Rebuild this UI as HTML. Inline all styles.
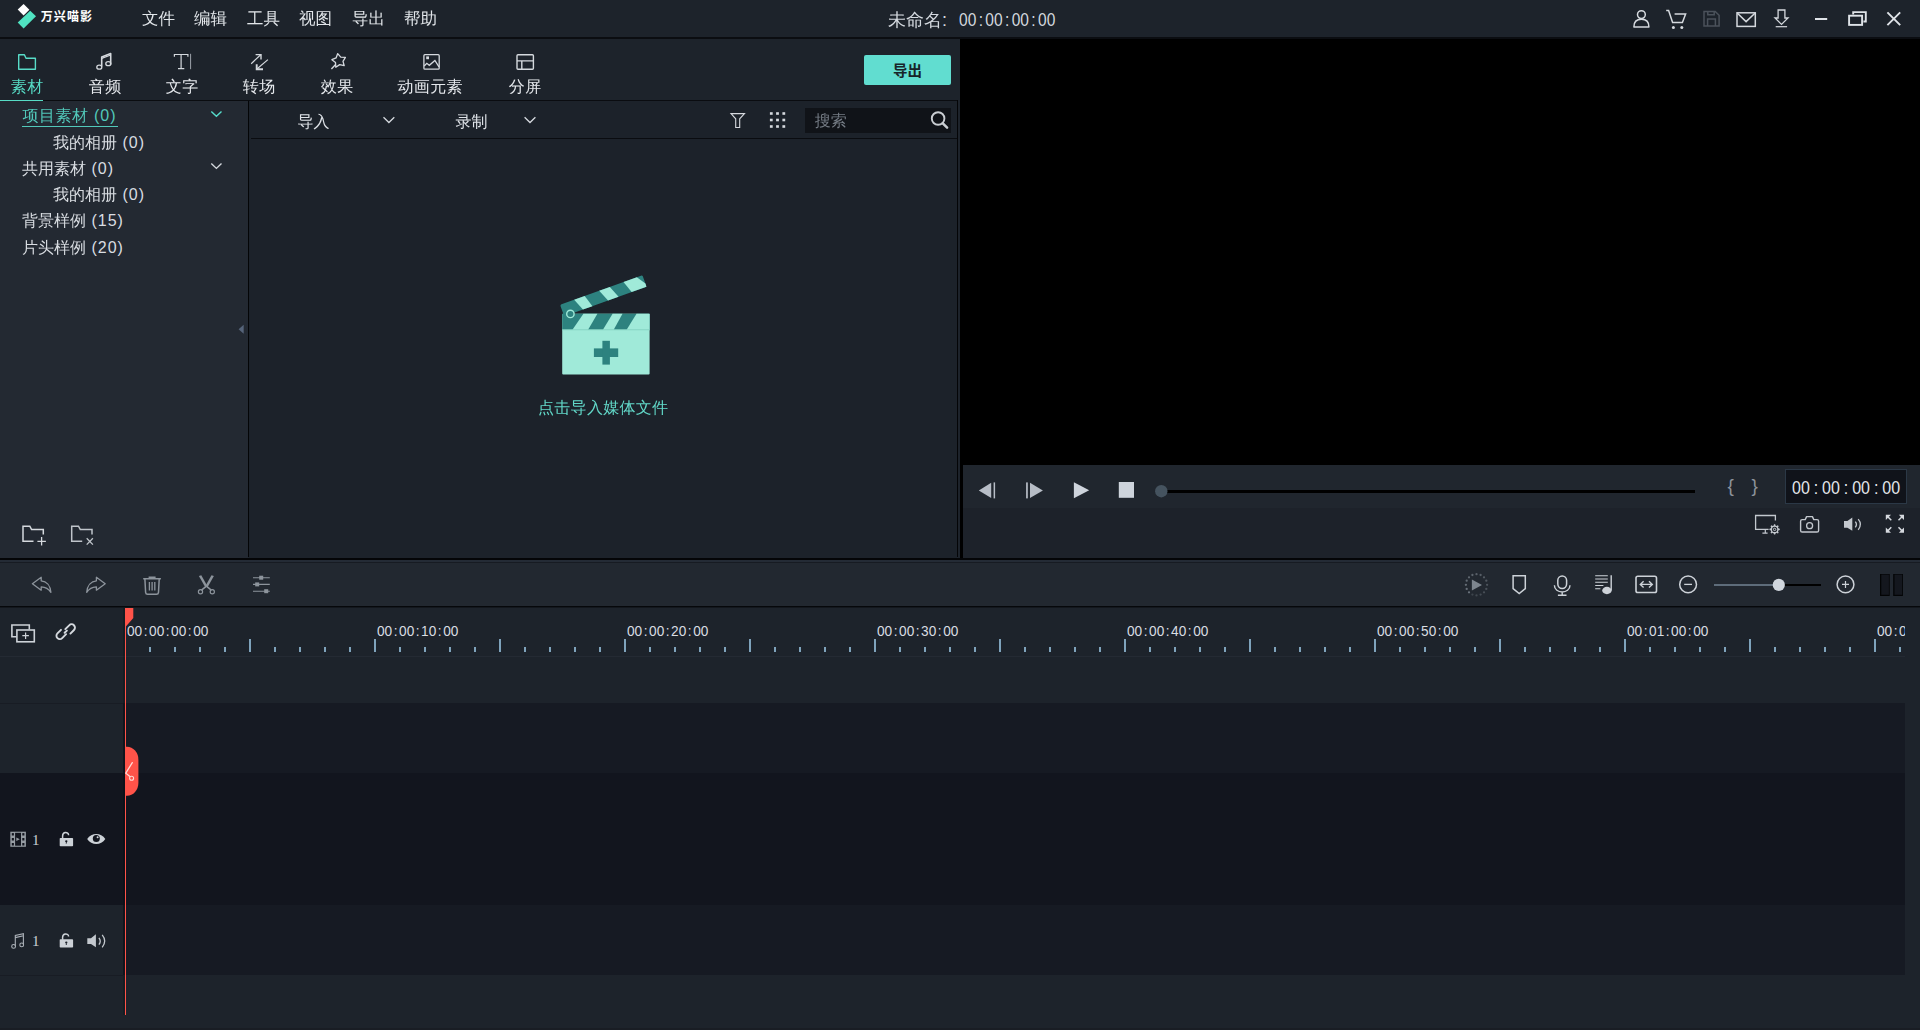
<!DOCTYPE html>
<html lang="zh-CN">
<head>
<meta charset="utf-8">
<title>万兴喵影</title>
<style>
*{box-sizing:border-box;margin:0;padding:0}
html,body{width:1920px;height:1030px;overflow:hidden;background:#1d232b}
body{position:relative;font-family:"Liberation Sans","WenQuanYi Zen Hei",sans-serif;font-size:16px;color:#d9dde2;-webkit-font-smoothing:antialiased}
.abs{position:absolute}
svg{position:absolute;overflow:visible}
.t{position:absolute;white-space:nowrap;line-height:20px}
.num{font-family:"Liberation Sans","WenQuanYi Zen Hei",sans-serif}
.sx{display:inline-block;transform-origin:0 50%;white-space:nowrap}
.sx i{font-style:normal}
.pn{letter-spacing:1px;margin-left:0}

/* ---------- title bar ---------- */
#titlebar{left:0;top:0;width:1920px;height:37px;background:#1d232b}
#titleline{left:0;top:37px;width:1920px;height:2px;background:#0b0d11}
.menu{top:7.8px;font-size:16.5px;color:#e2e6ea}
#brand{left:40.7px;top:8px;font-size:12px;letter-spacing:1.1px;font-weight:700;font-family:"Liberation Sans","Noto Sans CJK SC",sans-serif;color:#fff;line-height:18px}
#title{left:888px;top:9.5px;font-size:18px;color:#d4d9df}
#title2{left:958.6px;top:10px;font-size:17.5px;color:#d4d9df}
#title2 i{padding:0 2.7px}

/* ---------- tabs ---------- */
#tabbar{left:0;top:39px;width:960px;height:61px;background:#1d232b}
.tab{top:77px;font-size:16px;color:#e6e9ed;text-align:center;width:80px;line-height:20px;letter-spacing:.35px;text-indent:.35px}
.tab.on{color:#57dcc6}
#tabul{left:0;top:99.6px;width:43px;height:1.4px;background:#57dcc6}
#tabline{left:0;top:100px;width:958px;height:1px;background:#0a0c10}
#export{left:864px;top:55px;width:87px;height:30px;border-radius:2px;background:#61ddd0;color:#172428;font-size:14.5px;font-weight:700;font-family:"Liberation Sans","Noto Sans CJK SC",sans-serif;text-align:center;line-height:32px}

/* ---------- left tree ---------- */
#tree{left:0;top:101px;width:248px;height:457px;background:#232932}
#treeline{left:248px;top:101px;width:1px;height:456px;background:#040507}
.tr{font-size:16px;color:#eaedf0;letter-spacing:.5px}
.tr.on{color:#52c8ba}

/* ---------- media ---------- */
#media{left:249px;top:101px;width:708px;height:457px;background:#1c222a}
#medialine{left:251px;top:138px;width:706px;height:1px;background:#0a0c10}
#mediar{left:957px;top:100px;width:1px;height:457px;background:#040507}
#search{left:805px;top:108px;width:146px;height:24.5px;background:#101318}
#hint{left:538px;top:397.7px;font-size:16px;color:#62d9c9;letter-spacing:.3px}

/* ---------- preview ---------- */
#pv{left:960px;top:39px;width:960px;height:519px;background:#000}
#pvc{left:963px;top:465px;width:957px;height:93px;background:#1d222a}
#pvc1{left:963px;top:465px;width:957px;height:43px;background:#20262e}
#tcbox{left:1785px;top:469px;width:122px;height:35px;background:#10131a;border:1px solid #2b3846}
#tc{left:1791.7px;top:478px;font-size:18px;color:#e3e6ea}
#tc i{padding:0 4.4px}

/* ---------- separator & timeline toolbar ---------- */
#sep{left:0;top:558px;width:1920px;height:2px;background:#040507}
#tltb{left:0;top:560px;width:1920px;height:46px;background:#222830}
#tltbdk{left:0;top:562px;width:1920px;height:1px;background:#171b22}
#tltbhl{left:0;top:560px;width:1920px;height:2px;background:#242b35}
#tlline{left:0;top:606px;width:1920px;height:2px;background:linear-gradient(#06080b 0,#06080b 50%,#13171d 50%,#13171d 100%)}

/* ---------- timeline ---------- */
#ruler{left:0;top:608px;width:1920px;height:49px;background:#1d232b}
#rulerline{left:0;top:656px;width:1905px;height:1px;background:#242a33}
#ticks-s{left:149px;top:647px;width:1756px;height:5px;background:repeating-linear-gradient(90deg,#7fa3bc 0,#7fa3bc 2px,transparent 2px,transparent 25px)}
#ticks-l{left:249px;top:639px;width:1656px;height:13px;background:repeating-linear-gradient(90deg,#7fa3bc 0,#7fa3bc 2px,transparent 2px,transparent 125px)}
.rl{top:621px;font-size:14.5px;color:#d9dde2;line-height:20px}
.rl i{padding:0 1.65px}
#rowB{left:123px;top:703px;width:1782px;height:70px;background:#161a23}
#rowC{left:0;top:773px;width:1905px;height:132px;background:#12151e}
#rowD{left:123px;top:905px;width:1782px;height:70px;background:#161a23}
#lineB{left:0;top:703px;width:123px;height:1px;background:#181c24}
#lineD{left:0;top:975px;width:123px;height:1px;background:#181c24}
#ph{left:125px;top:608px;width:1.35px;height:407px;background:#ff5349}
.tn{font-size:14px;color:#c9ced4;line-height:16px}
</style>
</head>
<body>

<!-- ================= TITLE BAR ================= -->
<div class="abs" id="titlebar"></div>
<div class="abs" id="titleline"></div>
<svg id="logo" style="left:0;top:0" width="40" height="32" viewBox="0 0 40 32">
  <polygon points="23.6,4 29.4,9.7 23.6,15.6 17.7,9.6" fill="#ffffff"/>
  <polygon points="30.2,10.8 36,16.3 23.6,28.4 17.7,22.5" fill="#50e3c2"/>
</svg>
<div class="t" id="brand">万兴喵影</div>
<div class="t menu" style="left:142px">文件</div>
<div class="t menu" style="left:194px">编辑</div>
<div class="t menu" style="left:247px">工具</div>
<div class="t menu" style="left:299px">视图</div>
<div class="t menu" style="left:352px">导出</div>
<div class="t menu" style="left:404px">帮助</div>
<div class="t" id="title">未命名:</div>
<div class="t num" id="title2"><span class="sx" style="transform:scaleX(.887)">00<i>:</i>00<i>:</i>00<i>:</i>00</span></div>

<svg id="ti" style="left:0;top:0" width="1920" height="39" viewBox="0 0 1920 39" fill="none" stroke="#d5d9de" stroke-width="1.5">
  <!-- user -->
  <circle cx="1641.4" cy="14.6" r="3.9"/>
  <path d="M1633.9,26.9 C1633.9,21.5 1637,19.3 1641.4,19.3 C1645.8,19.3 1648.9,21.5 1648.9,26.9 Z" stroke-linejoin="round"/>
  <!-- cart -->
  <path d="M1666.2,10.6 H1668.6 L1672.6,22.4 H1682.4 L1685.6,13.9 H1674.6"/>
  <circle cx="1673.4" cy="27.4" r="1.5" fill="#d5d9de" stroke="none"/>
  <circle cx="1681.8" cy="27.4" r="1.5" fill="#d5d9de" stroke="none"/>
  <!-- save (disabled) -->
  <g stroke="#4b525b">
    <path d="M1704,11.4 H1715.2 L1719.1,15.3 V26 H1704 Z"/>
    <path d="M1707.8,11.4 V14.8 H1714.2 V11.4"/>
    <path d="M1707.6,26 V18.9 H1715.4 V26"/>
  </g>
  <!-- mail -->
  <rect x="1737" y="12.8" width="18.3" height="13.6"/>
  <path d="M1737.4,13.2 L1746.1,21.6 L1754.9,13.2"/>
  <!-- download -->
  <path d="M1778.1,10 H1784.9 V18 H1788 L1781.5,24.4 L1775,18 H1778.1 Z" stroke-width="1.3" stroke-linejoin="miter"/>
  <path d="M1775.7,26.7 H1787.1" stroke-width="1.2"/>
  <!-- window controls -->
  <g stroke="#dfe3e8" stroke-width="2">
    <path d="M1815,19 H1827.2"/>
    <path d="M1853.2,14.5 V12.1 H1865.8 V21.5 H1863.4" stroke-width="1.9"/>
    <rect x="1849.1" y="15.7" width="13" height="9.2" stroke-width="1.9"/>
    <path d="M1887.4,12.4 L1900.2,25.2 M1900.2,12.4 L1887.4,25.2" stroke-width="1.9"/>
  </g>
</svg>

<!-- ================= TABS ================= -->
<div class="abs" id="tabbar"></div>
<div class="t tab on" style="left:-13px">素材</div>
<div class="t tab" style="left:65px">音频</div>
<div class="t tab" style="left:142px">文字</div>
<div class="t tab" style="left:219px">转场</div>
<div class="t tab" style="left:297px">效果</div>
<div class="t tab" style="left:390px">动画元素</div>
<div class="t tab" style="left:485px">分屏</div>
<div class="abs" id="tabline"></div>
<div class="abs" id="tabul"></div>
<div class="abs" id="export">导出</div>

<svg id="tabi" style="left:0;top:39px" width="960" height="61" viewBox="0 39 960 61" fill="none" stroke="#d5d9de" stroke-width="1.3">
  <!-- folder (active) -->
  <path d="M18.7,69.3 V54.8 H24.4 L26,58.3 H35.4 V69.3 Z" stroke="#58dcc8" stroke-width="1.4" stroke-linejoin="round"/>
  <!-- music -->
  <path d="M101.7,66.6 V57 L110.7,53.6 V64.4" stroke-width="1.6" stroke-linejoin="round"/>
  <path d="M101.7,58.4 L110.7,55" stroke-width="1.2"/>
  <ellipse cx="99.3" cy="67.2" rx="2.5" ry="2"/>
  <ellipse cx="108.3" cy="63.7" rx="2.5" ry="2"/>
  <!-- text -->
  <path d="M174.4,56.8 V54.5 H187.9 V56.8 M181.1,54.5 V68.7 M178,68.7 H184.3" stroke-width="1.2"/>
  <path d="M190.6,53.8 V69.2" stroke="#9da3ab" stroke-width="1"/>
  <!-- transition -->
  <path d="M251.2,63.7 L260.7,54.7" stroke-width="1.2"/>
  <path d="M255.6,54.6 H261 V59.4" stroke-width="1.4"/>
  <path d="M267.9,59.6 L256.9,69" stroke-width="1.2"/>
  <path d="M256.7,64.2 V69.3 H263" stroke-width="1.9"/>
  <!-- effect -->
  <polygon points="337.7,53.6 340.8,57.1 345.4,57.3 343.0,61.3 344.2,65.7 339.7,64.6 335.8,67.2 335.5,62.6 331.9,59.7 336.1,57.9" stroke-width="1.3" stroke-linejoin="round"/>
  <path d="M335.4,64.8 L331.4,68.9" stroke-width="1.4"/>
  <!-- image -->
  <rect x="423.9" y="54.7" width="15.3" height="14.5" rx="1"/>
  <rect x="426.2" y="56.4" width="2.8" height="2.8" fill="#d5d9de" stroke="none"/>
  <path d="M424.2,66 L426.8,63.3 L429.3,65.3 L434.9,60.4 L439,66.8"/>
  <!-- split -->
  <rect x="517" y="54.7" width="16.4" height="14.5" rx="1" stroke-width="1.4"/>
  <path d="M517,60.9 H533.4 M521.8,60.9 V69.2" stroke-width="1.4"/>
</svg>

<!-- ================= TREE ================= -->
<div class="abs" id="tree"></div>
<div class="abs" id="treeline"></div>
<div class="t tr on" style="left:22.6px;top:106px">项目素材<span class="pn"> (0)</span></div>
<div class="abs" style="left:22px;top:126px;width:96px;height:1px;background:#52c8ba"></div>
<div class="t trNone" style="left:53px;top:133px">我的相册<span class="pn"> (0)</span></div>
<div class="t trNone" style="left:22px;top:159px">共用素材<span class="pn"> (0)</span></div>
<div class="t trNone" style="left:53px;top:185px">我的相册<span class="pn"> (0)</span></div>
<div class="t trNone" style="left:22px;top:211px">背景样例<span class="pn"> (15)</span></div>
<div class="t trNone" style="left:22px;top:238px">片头样例<span class="pn"> (20)</span></div>

<svg id="treei" style="left:0;top:101px" width="248" height="457" viewBox="0 101 248 457" fill="none" stroke="#d5d9de" stroke-width="1.4">
  <path d="M211.3,111.4 L216.4,116.3 L221.5,111.4" stroke="#56dccb"/>
  <path d="M211.3,163.5 L216.4,168.4 L221.5,163.5"/>
  <polygon points="238.6,329.3 243.7,324.8 243.7,333.8" fill="#56647a" stroke="none"/>
  <!-- folder add -->
  <path d="M33.5,541.3 H23 V526.2 H29.8 L31.6,529.5 H43.3 V534.6" stroke-width="1.5"/>
  <path d="M37.4,541.3 H45.9 M41.6,537 V545.6" stroke-width="1.3"/>
  <!-- folder remove -->
  <path d="M82.2,541.3 H71.7 V526.2 H78.5 L80.3,529.5 H92 V534.6" stroke-width="1.5" stroke="#bfc4ca"/>
  <path d="M86.7,538.2 L92.9,544.6 M92.9,538.2 L86.7,544.6" stroke-width="1.3" stroke="#bfc4ca"/>
</svg>

<!-- ================= MEDIA ================= -->
<div class="abs" id="media"></div>
<div class="abs" id="medialine"></div>
<div class="abs" id="mediar"></div>
<div class="t" style="left:297.5px;top:112px;font-size:16px;color:#dfe3e8">导入</div>
<div class="t" style="left:455.5px;top:112px;font-size:16px;color:#dfe3e8">录制</div>
<div class="abs" id="search"></div>
<div class="t" style="left:814.7px;top:110.5px;font-size:16px;color:#747b84">搜索</div>
<div class="t" id="hint">点击导入媒体文件</div>

<svg id="mediai" style="left:249px;top:101px" width="708" height="457" viewBox="249 101 708 457" fill="none" stroke="#d5d9de" stroke-width="1.3">
  <path d="M383.5,117.2 L388.9,122.5 L394.3,117.2"/>
  <path d="M524.6,117.2 L530,122.5 L535.4,117.2"/>
  <!-- funnel -->
  <path d="M731,113.6 H744.5 L739.7,118.8 V127.5 H735.7 V118.8 Z" stroke-width="1.1" stroke-linejoin="miter"/>
  <!-- grid -->
  <g fill="#d5d9de" stroke="none">
    <rect x="769.9" y="112.2" width="2.8" height="2.6"/><rect x="776.1" y="112.2" width="2.8" height="2.6"/><rect x="782.4" y="112.2" width="2.8" height="2.6"/>
    <rect x="769.9" y="118.7" width="2.8" height="2.6"/><rect x="776.1" y="118.7" width="2.8" height="2.6"/><rect x="782.4" y="118.7" width="2.8" height="2.6"/>
    <rect x="769.9" y="125.2" width="2.8" height="2.6"/><rect x="776.1" y="125.2" width="2.8" height="2.6"/><rect x="782.4" y="125.2" width="2.8" height="2.6"/>
  </g>
  <!-- magnifier -->
  <circle cx="938.1" cy="118.5" r="6.3" stroke="#c9cdd2" stroke-width="1.9"/>
  <path d="M942.8,123.3 L947.1,127.7" stroke="#c9cdd2" stroke-width="2.5" stroke-linecap="round"/>
</svg>
<svg id="clap" style="left:545px;top:265px" width="120" height="120" viewBox="545 265 120 120">
  <!-- body -->
  <rect x="562.2" y="313.7" width="87.4" height="60.8" rx="1" fill="#a0ead9"/>
  <path d="M562.2,313.7 H649.6 V329.7 H562.2 Z" fill="#2d827f"/>
  <g fill="#a0ead9">
    <polygon points="572.4,329.7 588.1,329.7 597.4,313.7 583.4,313.7"/>
    <polygon points="602.9,329.7 613.7,329.7 622.5,313.7 612.6,313.7"/>
    <polygon points="626.6,329.7 649.6,329.7 649.6,313.7 636.5,313.7"/>
  </g>
  <rect x="562.2" y="329.4" width="87.4" height="1" fill="#8fdccb"/>
  <!-- arm -->
  <g transform="rotate(-19.8 564.2 316.3)">
    <rect x="564.2" y="304.1" width="87.5" height="12.2" rx="1.5" fill="#2d827f"/>
    <g fill="#a0ead9">
      <polygon points="579.2,304.1 590.4,304.1 594.2,316.3 584.1,316.3"/>
      <polygon points="605.8,304.1 617.1,304.1 622,316.3 610.8,316.3"/>
      <polygon points="631.6,304.1 645.8,304.1 651.7,313 651.7,316.3 635.9,316.3"/>
    </g>
  </g>
  <!-- hinge -->
  <circle cx="570.4" cy="313.9" r="3.7" fill="#2d827f" stroke="#a0ead9" stroke-width="1.4"/>
  <!-- plus -->
  <rect x="593.9" y="348.4" width="24.3" height="8.6" fill="#2d827f"/>
  <rect x="602.4" y="340.8" width="7.5" height="23.8" fill="#2d827f"/>
</svg>

<!-- ================= PREVIEW ================= -->
<div class="abs" id="pv"></div>
<div class="abs" id="pvc"></div>
<div class="abs" id="pvc1"></div>
<div class="abs" id="tcbox"></div>
<div class="t num" id="tc"><span class="sx" style="transform:scaleX(.89)">00<i>:</i>00<i>:</i>00<i>:</i>00</span></div>

<svg id="pvi" style="left:963px;top:465px" width="957" height="93" viewBox="963 465 957 93" fill="none" stroke="#c3c8ce" stroke-width="1.4">
  <!-- transport -->
  <g stroke="none">
    <polygon points="978.8,490.4 991.2,482.7 991.2,498.1" fill="#b7bdc6"/>
    <rect x="993.6" y="482.4" width="1.5" height="16" fill="#b7bdc6"/>
    <rect x="1026.1" y="482.4" width="1.7" height="16" fill="#b7bdc6"/>
    <polygon points="1030,482.7 1042.9,490.4 1030,498.1" fill="#b7bdc6"/>
    <polygon points="1073.9,482.2 1089.2,490.3 1073.9,498.2" fill="#ced4dc"/>
    <rect x="1118.8" y="482" width="15.2" height="15.8" fill="#ced4dc"/>
    <rect x="1165" y="490" width="530" height="3" fill="#000"/>
    <circle cx="1161.3" cy="491.2" r="6.2" fill="#45535f"/>
  </g>
  <!-- monitor + gear -->
  <path d="M1775.4,520.6 V515.5 H1755.6 V529.3 H1768.6" stroke-width="1.3"/>
  <path d="M1765.3,529.6 V533 M1762.4,533.2 H1767.6" stroke-width="1.2"/>
  <polygon points="1774.04,524.23 1775.16,524.23 1775.70,525.66 1776.47,525.98 1777.86,525.35 1778.65,526.14 1778.02,527.53 1778.34,528.30 1779.77,528.84 1779.77,529.96 1778.34,530.50 1778.02,531.27 1778.65,532.66 1777.86,533.45 1776.47,532.82 1775.70,533.14 1775.16,534.57 1774.04,534.57 1773.50,533.14 1772.73,532.82 1771.34,533.45 1770.55,532.66 1771.18,531.27 1770.86,530.50 1769.43,529.96 1769.43,528.84 1770.86,528.30 1771.18,527.53 1770.55,526.14 1771.34,525.35 1772.73,525.98 1773.50,525.66" fill="#c3c8ce" stroke="none"/>
  <circle cx="1774.6" cy="529.4" r="2.6" fill="#1d222a" stroke="none"/>
  <circle cx="1774.6" cy="529.4" r="1.2" fill="none" stroke="#c3c8ce" stroke-width="1"/>
  <!-- camera -->
  <path d="M1802.2,519.6 H1805.2 L1806.6,516.6 H1812.4 L1813.8,519.6 H1817 Q1818.6,519.6 1818.6,521.2 V530.4 Q1818.6,532 1817,532 H1802.2 Q1800.6,532 1800.6,530.4 V521.2 Q1800.6,519.6 1802.2,519.6 Z" stroke-width="1.4" stroke-linejoin="round"/>
  <circle cx="1809.6" cy="525.7" r="3" stroke-width="1.3"/>
  <!-- speaker -->
  <path d="M1844,521 H1847.4 L1852.3,517.4 V530.8 L1847.4,527.8 H1844 Z" fill="#c3c8ce" stroke="none"/>
  <path d="M1855.3,521.7 Q1857.6,524.4 1855.3,527.4" stroke-width="1.3"/>
  <path d="M1858.2,519.2 Q1862.6,524.4 1858.2,529.9" stroke-width="1.3"/>
  <!-- fullscreen -->
  <g fill="#d5d9de" stroke="#d5d9de" stroke-width="1.5">
    <polygon points="1885.8,514.8 1891,514.8 1885.8,520" stroke="none"/><path d="M1887.5,516.5 L1891.3,520.3"/>
    <polygon points="1904,514.8 1898.8,514.8 1904,520" stroke="none"/><path d="M1902.3,516.5 L1898.5,520.3"/>
    <polygon points="1885.8,532.8 1891,532.8 1885.8,527.6" stroke="none"/><path d="M1887.5,531.1 L1891.3,527.3"/>
    <polygon points="1904,532.8 1898.8,532.8 1904,527.6" stroke="none"/><path d="M1902.3,531.1 L1898.5,527.3"/>
  </g>
</svg>
<div class="t" style="left:1727.6px;top:475.5px;font-size:19px;color:#8d939b;font-family:'Liberation Sans',sans-serif">{</div>
<div class="t" style="left:1751.6px;top:475.5px;font-size:19px;color:#8d939b;font-family:'Liberation Sans',sans-serif">}</div>

<!-- ================= SEPARATOR / TOOLBAR ================= -->
<div class="abs" id="tltb"></div>
<div class="abs" id="tltbhl"></div>
<div class="abs" id="tltbdk"></div>
<div class="abs" id="sep"></div>
<div class="abs" id="tlline"></div>

<svg id="tbi" style="left:0;top:563px" width="1920" height="43" viewBox="0 563 1920 43" fill="none" stroke="#8d949c" stroke-width="1.3">
  <!-- undo -->
  <path d="M32.4,583.7 L41.2,577.3 V580.8 C46.5,581.2 50.3,585.5 50.9,592.4 C48.6,588.6 45.6,586.9 41.2,586.8 V590.2 Z" stroke-linejoin="round"/>
  <!-- redo -->
  <path d="M105.2,583.7 L96.4,577.3 V580.8 C91.1,581.2 87.3,585.5 86.7,592.4 C89,588.6 92,586.9 96.4,586.8 V590.2 Z" stroke-linejoin="round"/>
  <!-- trash -->
  <path d="M143.2,578.7 H160.9 M149.3,578.5 V577.2 H154.9 V578.5" stroke-width="1.4"/>
  <path d="M144.9,579 L145.6,592.3 Q145.8,594.2 147.6,594.2 H156.5 Q158.3,594.2 158.5,592.3 L159.2,579" stroke-width="1.5"/>
  <path d="M149.4,582 V590.6 M152.1,582 V590.6 M154.8,582 V590.6" stroke-width="1.3"/>
  <!-- scissors -->
  <g fill="#8d949c" stroke="none">
    <polygon points="198.9,575.9 201.3,575.3 207.6,586.6 205.4,587.6"/>
    <polygon points="213.9,575.9 211.5,575.3 205.2,586.6 207.4,587.6"/>
  </g>
  <path d="M207,586.6 L211.3,590.2 M205.8,586.6 L201.5,590.2" stroke-width="1.5"/>
  <circle cx="200.5" cy="591.8" r="2.1" stroke-width="1.2"/>
  <circle cx="212.3" cy="591.8" r="2.1" stroke-width="1.2"/>
  <!-- sliders -->
  <path d="M253,577.7 H269.8 M253,584.4 H269.8 M253,591.2 H269.8" stroke-width="1.1"/>
  <g fill="#8d949c" stroke="none"><rect x="259.2" y="575.7" width="4" height="4"/><rect x="255.2" y="582.4" width="4" height="4"/><rect x="264.2" y="589.2" width="4" height="4"/></g>
  <!-- render preview (disabled) -->
  <g stroke="none"><circle cx="1476.5" cy="574.2" r="1.15" fill="#6b737c" opacity="0.76"/><circle cx="1480.6" cy="575.0" r="1.15" fill="#6b737c" opacity="0.72"/><circle cx="1484.0" cy="577.3" r="1.15" fill="#6b737c" opacity="0.68"/><circle cx="1486.3" cy="580.7" r="1.15" fill="#6b737c" opacity="0.63"/><circle cx="1487.1" cy="584.8" r="1.15" fill="#6b737c" opacity="0.59"/><circle cx="1486.3" cy="588.9" r="1.15" fill="#6b737c" opacity="0.55"/><circle cx="1484.0" cy="592.3" r="1.15" fill="#6b737c" opacity="0.51"/><circle cx="1480.6" cy="594.6" r="1.15" fill="#6b737c" opacity="0.47"/><circle cx="1476.5" cy="595.4" r="1.15" fill="#6b737c" opacity="0.43"/><circle cx="1472.4" cy="594.6" r="1.15" fill="#6b737c" opacity="0.39"/><circle cx="1469.0" cy="592.3" r="1.15" fill="#6b737c" opacity="1.00"/><circle cx="1466.7" cy="588.9" r="1.15" fill="#6b737c" opacity="0.96"/><circle cx="1465.9" cy="584.8" r="1.15" fill="#6b737c" opacity="0.92"/><circle cx="1466.7" cy="580.7" r="1.15" fill="#6b737c" opacity="0.88"/><circle cx="1469.0" cy="577.3" r="1.15" fill="#6b737c" opacity="0.84"/><circle cx="1472.4" cy="575.0" r="1.15" fill="#6b737c" opacity="0.80"/><polygon points="1471.9,579.6 1482,585 1471.9,590.4" fill="#7d858e"/></g>
  <g stroke="#cdd2d8" stroke-width="1.5">
    <!-- marker -->
    <path d="M1513.1,575.8 H1525.3 V588.6 L1519.2,593.6 L1513.1,588.6 Z" stroke-linejoin="miter"/>
    <!-- mic -->
    <rect x="1557.8" y="575.9" width="8.8" height="12.6" rx="4.4"/>
    <path d="M1554.4,585.2 C1554.4,594.2 1570,594.2 1570,585.2 M1562.2,592 V595 M1557.9,595.2 H1566.5" stroke-width="1.4"/>
    <!-- music list -->
    <path d="M1595.2,575.8 H1607.8 M1595.2,579 H1607.8 M1595.2,582.3 H1607.8 M1595.2,585.5 H1603.4 M1595.2,588.7 H1600.4" stroke-width="1.1"/>
    <path d="M1611.2,575.2 V590.6" stroke-width="1.4"/>
    <ellipse cx="1606.9" cy="590.5" rx="4.7" ry="3.7" fill="#cdd2d8" stroke="none"/>
    <!-- fit -->
    <rect x="1636" y="576.3" width="20.5" height="16.2" rx="1.8" stroke-width="1.6"/>
    <path d="M1640.4,584.4 H1652.2 M1643.6,581.3 L1640.3,584.4 L1643.6,587.5 M1649,581.3 L1652.3,584.4 L1649,587.5" stroke-width="1.4"/>
    <!-- zoom out -->
    <circle cx="1688.1" cy="584.4" r="8.4"/>
    <path d="M1684.2,584.4 H1692" stroke-width="1.3"/>
    <!-- zoom in -->
    <circle cx="1845.5" cy="584.4" r="8.4"/>
    <path d="M1842,584.4 H1849 M1845.5,580.9 V587.9" stroke-width="1.2"/>
  </g>
  <!-- zoom slider -->
  <g stroke="none">
    <rect x="1714" y="584" width="65" height="2" fill="#5e6c7a"/>
    <rect x="1779" y="584" width="42" height="2" fill="#000"/>
    <circle cx="1778.8" cy="584.9" r="6.1" fill="#d0d6dd"/>
    <rect x="1880" y="574" width="9.7" height="22" fill="#030405"/><rect x="1881.3" y="574.6" width="7.6" height="20.2" fill="#14171e"/>
    <rect x="1893.2" y="574" width="9.7" height="22" fill="#030405"/><rect x="1894.5" y="574.6" width="7.6" height="20.2" fill="#14171e"/>
  </g>
</svg>

<!-- ================= TIMELINE ================= -->
<div class="abs" id="ruler"></div>
<div class="abs" id="rulerline"></div>
<div class="abs" id="rowB"></div>
<div class="abs" id="rowC"></div>
<div class="abs" id="rowD"></div>
<div class="abs" id="lineB"></div>
<div class="abs" id="lineD"></div>
<div class="abs" id="ticks-s"></div>
<div class="abs" id="ticks-l"></div>
<div class="t rl num" style="left:127px"><span class="sx" style="transform:scaleX(.94)">00<i>:</i>00<i>:</i>00<i>:</i>00</span></div>
<div class="t rl num" style="left:377px"><span class="sx" style="transform:scaleX(.94)">00<i>:</i>00<i>:</i>10<i>:</i>00</span></div>
<div class="t rl num" style="left:627px"><span class="sx" style="transform:scaleX(.94)">00<i>:</i>00<i>:</i>20<i>:</i>00</span></div>
<div class="t rl num" style="left:877px"><span class="sx" style="transform:scaleX(.94)">00<i>:</i>00<i>:</i>30<i>:</i>00</span></div>
<div class="t rl num" style="left:1127px"><span class="sx" style="transform:scaleX(.94)">00<i>:</i>00<i>:</i>40<i>:</i>00</span></div>
<div class="t rl num" style="left:1377px"><span class="sx" style="transform:scaleX(.94)">00<i>:</i>00<i>:</i>50<i>:</i>00</span></div>
<div class="t rl num" style="left:1627px"><span class="sx" style="transform:scaleX(.94)">00<i>:</i>01<i>:</i>00<i>:</i>00</span></div>
<div class="t rl num" style="left:1877px;width:28px;overflow:hidden"><span class="sx" style="transform:scaleX(.94)">00<i>:</i>01<i>:</i>10<i>:</i>00</span></div>
<div class="abs" style="left:123px;top:608px;width:2px;height:407px;background:rgba(0,0,0,.2)"></div>
<div class="abs" style="left:0;top:1028px;width:1920px;height:2px;background:#191d24"></div>
<div class="abs" id="ph"></div>
<svg style="left:125px;top:608px" width="9" height="20" viewBox="0 0 9 20"><polygon points="0,0 8.3,0 8.3,10 0,19.5" fill="#ff5349"/></svg>

<svg id="tli" style="left:0;top:608px" width="140" height="422" viewBox="0 608 140 422" fill="none">
  <!-- add track -->
  <g stroke="#cdd2d8" stroke-width="1.6">
    <path d="M16.6,636.7 H11.9 V625 H29.3 V629.6"/>
    <rect x="16.9" y="630" width="17.4" height="11.8"/>
    <path d="M22.3,635.7 H28.9 M25.6,632.4 V639" stroke-width="1.2"/>
  </g>
  <!-- link -->
  <g stroke="#d5d9de" stroke-width="1.9" stroke-linecap="round">
    <path d="M65.3,629.2 L69.2,625.3 A3.35,3.35 0 0 1 74,630 L70.4,633.6" />
    <path d="M66.1,634.2 L62.2,638.1 A3.35,3.35 0 0 1 57.4,633.4 L61,629.8" />
    <path d="M64.6,632.8 L66.9,630.6"/>
  </g>
  <!-- scissor handle -->
  <path d="M125,746.8 H127 A11.4,13 0 0 1 138.4,759.8 V782.8 A11.4,13 0 0 1 127,795.8 H125 Z" fill="#ff5349"/>
  <path d="M132.3,762.6 L125.8,773.2 L129.9,776.6" stroke="#ffd9d4" stroke-width="1.3" stroke-linecap="round"/>
  <circle cx="131.6" cy="778.2" r="2" stroke="#ffd9d4" stroke-width="1.1"/>
  <!-- video track -->
  <g>
    <rect x="10.3" y="831.7" width="15.6" height="15.1" fill="#959ba2"/>
    <rect x="15.1" y="832.8" width="5.9" height="12.9" fill="#12151e"/>
    <g fill="#12151e">
      <rect x="11.8" y="833.1" width="2.1" height="2.4"/><rect x="11.8" y="838" width="2.1" height="2.5"/><rect x="11.8" y="843" width="2.1" height="2.5"/>
      <rect x="22.3" y="833.1" width="2.1" height="2.4"/><rect x="22.3" y="838" width="2.1" height="2.5"/><rect x="22.3" y="843" width="2.1" height="2.5"/>
    </g>
    <polygon points="16.3,837.6 19.8,839.3 16.3,841" fill="#959ba2"/>
  </g>
  <path d="M62.6,838.4 V836.0 C62.6,831.6 68.4,831.6 68.6,835.2" stroke="#cdd2d8" stroke-width="1.5" fill="none"/>
  <rect x="59.7" y="838.0" width="13.4" height="8.2" rx="0.8" fill="#cdd2d8"/>
  <circle cx="66.3" cy="841.3" r="1.15" fill="#12151e"/><path d="M66.3,841.3 L66.9,843.6 H65.7 Z" fill="#12151e"/>
  <path d="M87.2,838.9 C91.5,832.2 101,832.2 105.3,838.9 C101,845.6 91.5,845.6 87.2,838.9 Z" fill="#cdd2d8"/>
  <circle cx="96.3" cy="838.5" r="3.5" fill="#12151e"/>
  <circle cx="97.6" cy="837.2" r="1" fill="#cdd2d8"/>
  <!-- audio track -->
  <g stroke="#aab0b7" stroke-width="1.1">
    <path d="M15.3,946 V935.4 L23.4,933.6 V944.6 M15.3,937.6 L23.4,935.8"/>
    <circle cx="13.6" cy="946.4" r="1.9"/>
    <circle cx="21.7" cy="944.9" r="1.9"/>
  </g>
  <path d="M62.6,939.7 V937.3 C62.6,932.9 68.4,932.9 68.6,936.5" stroke="#cdd2d8" stroke-width="1.5" fill="none"/>
  <rect x="59.7" y="939.3" width="13.4" height="8.2" rx="0.8" fill="#cdd2d8"/>
  <circle cx="66.3" cy="942.6" r="1.15" fill="#1e232c"/><path d="M66.3,942.6 L66.9,944.9 H65.7 Z" fill="#1e232c"/>
  <path d="M87.3,938.3 H91 L95.9,934.2 V947.2 L91,943.9 H87.3 Z" fill="#c3c8ce"/>
  <path d="M98.9,937.8 Q101.6,941 98.9,944.6" stroke="#c3c8ce" stroke-width="1.3"/>
  <path d="M102.2,934.9 Q107.2,941 102.2,947.4" stroke="#c3c8ce" stroke-width="1.3"/>
</svg>
<div class="t tn" style="left:32px;top:832px;font-family:'Liberation Serif',serif;font-size:15px">1</div>
<div class="t tn" style="left:32px;top:933px;font-family:'Liberation Serif',serif;font-size:15px">1</div>

</body>
</html>
